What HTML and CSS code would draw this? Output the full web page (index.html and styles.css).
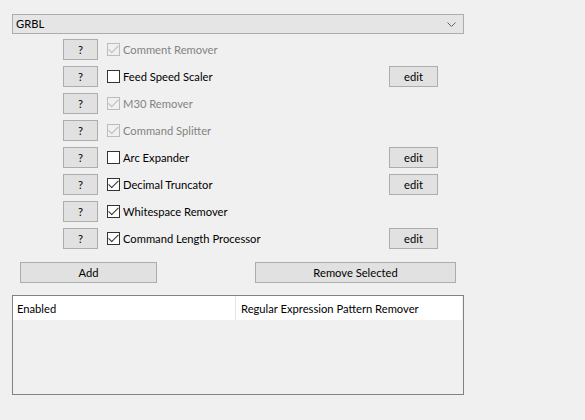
FILE: index.html
```html
<!DOCTYPE html>
<html>
<head>
<meta charset="utf-8">
<link rel="stylesheet" href="styles.css">
</head>
<body>
<div class="app">
  <div class="combo">
    <span class="combo-text">GRBL</span>
    <svg class="chev" width="9" height="5" viewBox="0 0 9 5"><path d="M0.5 0.5 L4.5 4.5 L8.5 0.5" fill="none" stroke="#606060" stroke-width="1"/></svg>
  </div>

  <div class="rows">
    <div class="row">
      <button class="btn q">?</button>
      <label class="chk disabled"><span class="box checked"></span>Comment Remover</label>
    </div>
    <div class="row">
      <button class="btn q">?</button>
      <label class="chk"><span class="box"></span>Feed Speed Scaler</label>
      <button class="btn edit">edit</button>
    </div>
    <div class="row">
      <button class="btn q">?</button>
      <label class="chk disabled"><span class="box checked"></span>M30 Remover</label>
    </div>
    <div class="row">
      <button class="btn q">?</button>
      <label class="chk disabled"><span class="box checked"></span>Command Splitter</label>
    </div>
    <div class="row">
      <button class="btn q">?</button>
      <label class="chk"><span class="box"></span>Arc Expander</label>
      <button class="btn edit">edit</button>
    </div>
    <div class="row">
      <button class="btn q">?</button>
      <label class="chk"><span class="box checked"></span>Decimal Truncator</label>
      <button class="btn edit">edit</button>
    </div>
    <div class="row">
      <button class="btn q">?</button>
      <label class="chk"><span class="box checked"></span>Whitespace Remover</label>
    </div>
    <div class="row">
      <button class="btn q">?</button>
      <label class="chk"><span class="box checked"></span>Command Length Processor</label>
      <button class="btn edit">edit</button>
    </div>
  </div>

  <div class="actions">
    <button class="btn add">Add</button>
    <button class="btn remove">Remove Selected</button>
  </div>

  <div class="list">
    <div class="item">
      <span class="col1">Enabled</span>
      <span class="col2">Regular Expression Pattern Remover</span>
    </div>
  </div>
</div>
</body>
</html>
```

FILE: styles.css
```css
html, body {
  margin: 0;
  padding: 0;
  background: #f0f0f0;
}
body {
  font-family: Lato, "Noto Sans", sans-serif;
  font-size: 11.2px;
  color: #000;
}
.app {
  padding: 14px 0 0 12px;
  width: 452px;
}
.combo {
  box-sizing: border-box;
  height: 20px;
  width: 452px;
  border: 1px solid #adadad;
  background: #e5e5e5;
  display: flex;
  align-items: center;
  justify-content: space-between;
  padding: 0 4px 0 3px;
}
.combo-text {
  line-height: 18px;
}
.chev {
  margin-right: 3px;
}
.rows {
  margin: 5px 0 0 51px;
  width: 375px;
  display: flex;
  flex-direction: column;
  gap: 6px;
}
.row {
  display: grid;
  grid-template-columns: 35px 1fr 49px;
  column-gap: 9px;
  height: 21px;
  align-items: center;
}
.btn {
  box-sizing: border-box;
  font: inherit;
  color: #000;
  background: #e1e1e1;
  border: 1px solid #adadad;
  border-radius: 0;
  padding: 0;
  height: 21px;
  margin: 0;
  line-height: 19px;
}
.q {
  width: 35px;
  grid-column: 1;
}
.edit {
  width: 49px;
  grid-column: 3;
}
.chk {
  grid-column: 2;
  display: flex;
  align-items: center;
  gap: 3px;
  white-space: nowrap;
}
.box {
  box-sizing: border-box;
  width: 13px;
  height: 13px;
  border: 1px solid #333;
  background: #fff;
  position: relative;
  flex: none;
}
.box.checked::after {
  content: "";
  position: absolute;
  left: 3px;
  top: -1px;
  width: 4px;
  height: 9px;
  border-right: 1px solid #333;
  border-bottom: 1px solid #333;
  transform: rotate(45deg);
}
.chk.disabled {
  color: #838383;
}
.chk.disabled .box {
  border-color: #bcbcbc;
  background: #f0f0f0;
}
.chk.disabled .box.checked::after {
  border-color: #bcbcbc;
}
.actions {
  display: flex;
  margin: 13px 0 0 8px;
  gap: 98px;
}
.add {
  width: 137px;
}
.remove {
  width: 201px;
}
.list {
  box-sizing: border-box;
  margin-top: 12px;
  width: 452px;
  height: 100px;
  border: 1px solid #828282;
  padding: 0 1px 0 0;
}
.item {
  display: grid;
  grid-template-columns: 223px 1fr;
  background: #fff;
  height: 24px;
  align-items: center;
}
.col1 {
  padding: 1px 0 0 4px;
  border-right: 1px solid #e5e5e5;
  line-height: 23px;
}
.col2 {
  padding: 1px 0 0 5px;
  line-height: 23px;
}
```
